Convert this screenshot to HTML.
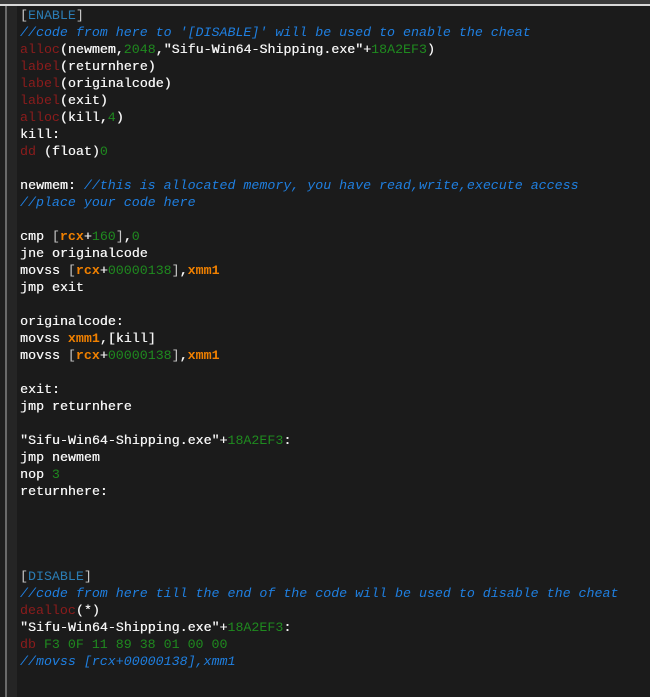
<!DOCTYPE html>
<html><head><style>
html,body{margin:0;padding:0;width:650px;height:697px;overflow:hidden;background:#1b1b1b}
.top{position:absolute;left:0;top:0;width:650px;height:4px;background:#3a3a3a}
.w1{position:absolute;left:0;top:4px;width:650px;height:2px;background:#d8d8d8}
.g{position:absolute;left:0;top:6px;width:5px;height:691px;background:#1e1e1e}
.vl{position:absolute;left:5px;top:6px;width:2px;height:691px;background:#6a6a6a}
.p{position:absolute;left:7px;top:6px;width:10px;height:691px;background:#252525}
pre{position:absolute;left:20px;top:7px;margin:0;font-family:"Liberation Mono",monospace;font-size:13.3px;line-height:17px;color:#f4f4f4;font-weight:normal;text-shadow:0.3px 0 0 #f4f4f4}
.c{color:#1f7fe0;font-style:italic;text-shadow:none}
.k{color:#8c1c1c;text-shadow:none}
.n{color:#1f8a1f;text-shadow:none}
.r{color:#f08000;font-weight:bold;text-shadow:none}
.b{color:#c8c8c8;text-shadow:none}
.s{color:#2b7db5;text-shadow:none}
</style></head><body>
<div class="top"></div><div class="w1"></div><div class="g"></div><div class="vl"></div><div class="p"></div>
<pre><span class="s"><span class="b">[</span>ENABLE<span class="b">]</span></span>
<span class="c">//code from here to '[DISABLE]' will be used to enable the cheat</span>
<span class="k">alloc</span>(newmem,<span class="n">2048</span>,"Sifu-Win64-Shipping.exe"+<span class="n">18A2EF3</span>)
<span class="k">label</span>(returnhere)
<span class="k">label</span>(originalcode)
<span class="k">label</span>(exit)
<span class="k">alloc</span>(kill,<span class="n">4</span>)
kill:
<span class="k">dd</span> (float)<span class="n">0</span>

newmem: <span class="c">//this is allocated memory, you have read,write,execute access</span>
<span class="c">//place your code here</span>

cmp <span class="b">[</span><span class="r">rcx</span>+<span class="n">160</span><span class="b">]</span>,<span class="n">0</span>
jne originalcode
movss <span class="b">[</span><span class="r">rcx</span>+<span class="n">00000138</span><span class="b">]</span>,<span class="r">xmm1</span>
jmp exit

originalcode:
movss <span class="r">xmm1</span>,[kill]
movss <span class="b">[</span><span class="r">rcx</span>+<span class="n">00000138</span><span class="b">]</span>,<span class="r">xmm1</span>

exit:
jmp returnhere

"Sifu-Win64-Shipping.exe"+<span class="n">18A2EF3</span>:
jmp newmem
nop <span class="n">3</span>
returnhere:




<span class="s"><span class="b">[</span>DISABLE<span class="b">]</span></span>
<span class="c">//code from here till the end of the code will be used to disable the cheat</span>
<span class="k">dealloc</span>(*)
"Sifu-Win64-Shipping.exe"+<span class="n">18A2EF3</span>:
<span class="k">db</span> <span class="n">F3 0F 11 89 38 01 00 00</span>
<span class="c">//movss [rcx+00000138],xmm1</span>
</pre>
</body></html>
